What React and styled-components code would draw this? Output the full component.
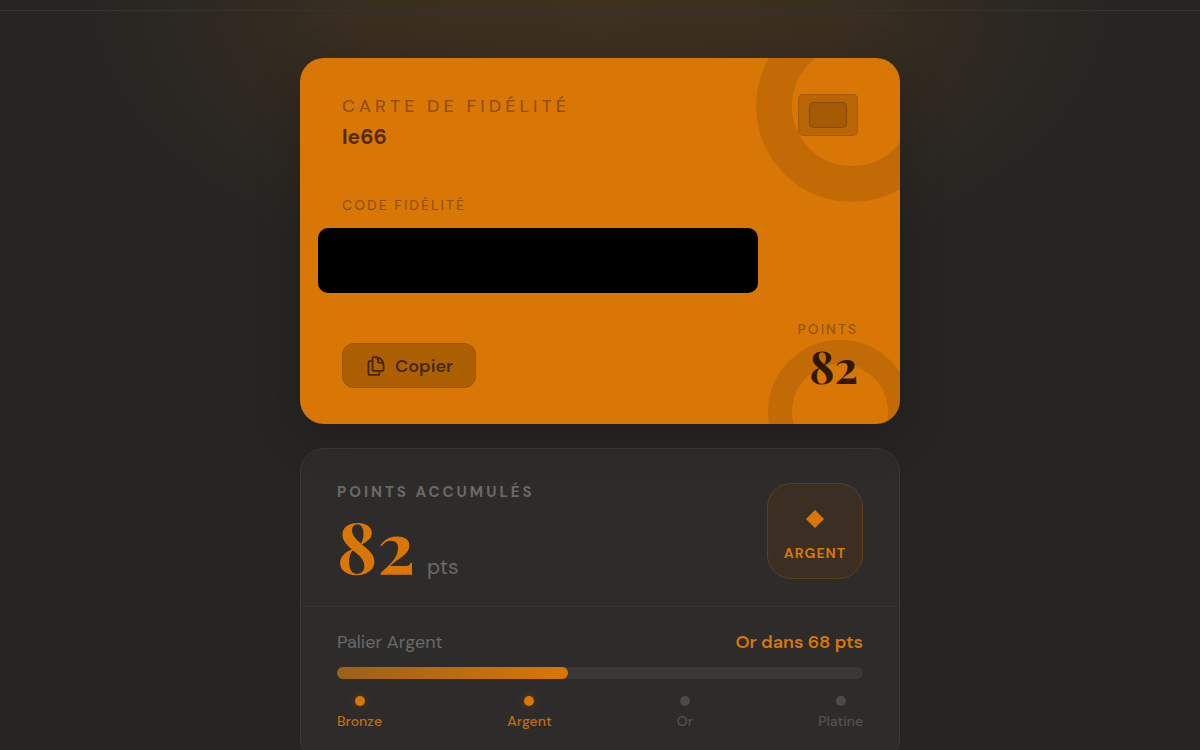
import React from "react"
import styled, { createGlobalStyle, css } from "styled-components"

const colors = {
  background: "#262523",
  panel: "#2e2c2a",
  track: "#3a3735",
  line: "#3b3936",
  softLine: "#353330",
  primary: "#d97706",
  muted: "#6b6966",
  faint: "#53514f",
}
const fonts = {
  main: `"DM Sans", Inter, "Liberation Sans", sans-serif`,
  display: `"Playfair Display", "Liberation Serif", serif`,
}

const GlobalStyle = createGlobalStyle`
  * {
    box-sizing: border-box;
  }
  body {
    margin: 0;
    background: ${colors.background};
    font-family: ${fonts.main};
  }
`

const Page = styled.div`
  min-height: 100vh;
  background: radial-gradient(
    ellipse 540px 300px at 50% 0,
    rgba(217, 119, 6, 0.14),
    rgba(217, 119, 6, 0.11) 45%,
    rgba(217, 119, 6, 0.04) 75%,
    transparent
  );
`
const TopBar = styled.header`
  height: 11px;
  border-bottom: 1px solid ${colors.softLine};
`
const Main = styled.main`
  display: flex;
  flex-direction: column;
  gap: 24px;
  max-width: 600px;
  margin: 0 auto;
  padding: 47px 0 48px;
`
const Card = styled.section`
  position: relative;
  padding: 36px 42px;
  border-radius: 24px;
  overflow: hidden;
  background: ${colors.primary};
  box-shadow: 0 12px 48px rgba(0, 0, 0, 0.2);
`
const Ring = styled.span`
  position: absolute;
  border-radius: 50%;
  border-style: solid;
  border-color: rgba(0, 0, 0, 0.1);
  ${({ $corner }) =>
    $corner === "top"
      ? css`
          top: -48px;
          right: -48px;
          width: 192px;
          height: 192px;
          border-width: 36px;
        `
      : css`
          bottom: -60px;
          right: -12px;
          width: 144px;
          height: 144px;
          border-width: 24px;
        `};
`
const Row = styled.div`
  position: relative;
  display: flex;
  justify-content: space-between;
  align-items: ${({ $align }) => $align || "flex-start"};
`
const CardTitle = styled.h1`
  margin: 0;
  font-size: 18px;
  line-height: 24px;
  font-weight: 500;
  letter-spacing: 4px;
  text-transform: uppercase;
  color: rgba(0, 0, 0, 0.35);
`
const CardOwner = styled.p`
  margin: 5px 0 0;
  font-size: 21px;
  line-height: 28px;
  font-weight: 700;
  color: rgba(0, 0, 0, 0.65);
`
const Chip = styled.span`
  display: grid;
  place-items: center;
  width: 60px;
  height: 42px;
  border: 1px solid rgba(0, 0, 0, 0.1);
  border-radius: 5px;
  background: rgba(0, 0, 0, 0.15);
  &:after {
    content: "";
    width: 36px;
    height: 24px;
    border: 1px solid rgba(0, 0, 0, 0.2);
    border-radius: 5px;
    background: rgba(0, 0, 0, 0.1);
  }
`
const Caption = styled.p`
  margin: 0;
  font-size: 14px;
  line-height: 20px;
  font-weight: 500;
  letter-spacing: 2px;
  text-transform: uppercase;
  color: rgba(0, 0, 0, 0.34);
`
const Code = styled.div`
  margin: 44px 0 26px;
`
const CodeMask = styled.div`
  width: 440px;
  max-width: 100%;
  height: 65px;
  margin: 13px 0 0 -24px;
  border-radius: 10px;
  background: #000;
`
const CopyButton = styled.button`
  display: flex;
  align-items: center;
  gap: 8px;
  height: 45px;
  padding: 0 22px;
  border: 1px solid rgba(0, 0, 0, 0.1);
  border-radius: 12px;
  background: rgba(0, 0, 0, 0.2);
  font-family: ${fonts.main};
  font-size: 18px;
  font-weight: 600;
  color: rgba(0, 0, 0, 0.6);
`
const CardPoints = styled.div`
  text-align: right;
`
const Score = styled.p`
  font-family: ${fonts.display};
  font-weight: 700;
  ${({ $large }) =>
    $large
      ? css`
          margin: 0;
          font-size: 72px;
          line-height: 72px;
          color: ${colors.primary};
        `
      : css`
          margin: 2px 0 -2px;
          font-size: 45px;
          line-height: 49px;
          color: rgba(0, 0, 0, 0.8);
        `};
`
const Unit = styled.span`
  margin-left: 12px;
  font-family: ${fonts.main};
  font-size: 21px;
  line-height: 24px;
  font-weight: 400;
  color: ${colors.muted};
`
const Panel = styled.section`
  border: 1px solid ${colors.line};
  border-radius: 24px;
  background: ${colors.panel};
`
const PanelBlock = styled.div`
  padding: ${({ $top }) => ($top ? "34px 36px 26px" : "23px 36px 32px")};
  border-bottom: ${({ $top }) => ($top ? `1px solid ${colors.softLine}` : "0")};
`
const PanelTitle = styled.h2`
  margin: 0 0 7px;
  font-size: 15px;
  line-height: 18px;
  font-weight: 700;
  letter-spacing: 3px;
  text-transform: uppercase;
  color: ${colors.muted};
`
const Badge = styled.div`
  display: flex;
  flex-direction: column;
  align-items: center;
  justify-content: center;
  gap: 17px;
  width: 96px;
  height: 96px;
  padding-top: 8px;
  border: 1px solid #5e3e19;
  border-radius: 24px;
  background: #3b2f24;
  font-size: 14px;
  line-height: 16px;
  font-weight: 700;
  letter-spacing: 1px;
  text-transform: uppercase;
  color: ${colors.primary};
`
const Tier = styled.span`
  font-size: 18px;
  line-height: 24px;
  font-weight: ${({ $next }) => ($next ? 600 : 400)};
  color: ${({ $next }) => ($next ? colors.primary : colors.muted)};
`
const Track = styled.div`
  height: 12px;
  margin: 13px 0 17px;
  border-radius: 6px;
  background: ${colors.track};
`
const Fill = styled.div`
  height: 100%;
  border-radius: 6px;
  background: linear-gradient(90deg, #9c6019, ${colors.primary});
`
const Steps = styled.ol`
  display: flex;
  justify-content: space-between;
  margin: 0;
  padding: 0;
  list-style: none;
`
const Step = styled.li`
  display: flex;
  flex-direction: column;
  align-items: center;
  gap: 6px;
  font-size: 14px;
  line-height: 18px;
  font-weight: 500;
  color: ${({ $done }) => ($done ? "#c36d0b" : colors.faint)};
  &:before {
    content: "";
    width: 10px;
    height: 10px;
    border-radius: 50%;
    background: ${({ $done }) => ($done ? colors.primary : "#4c4a48")};
    box-shadow: ${({ $done }) =>
      $done ? "0 0 8px rgba(217, 119, 6, 0.3)" : "none"};
  }
`

const CopyIcon = () => (
  <svg
    width="22"
    height="22"
    viewBox="0 0 24 24"
    fill="none"
    stroke="currentColor"
    strokeWidth="2"
    strokeLinecap="round"
    strokeLinejoin="round"
    aria-hidden="true"
  >
    <path d="M15.75 17.25v3.375c0 .621-.504 1.125-1.125 1.125h-9.75a1.125 1.125 0 0 1-1.125-1.125V7.875c0-.621.504-1.125 1.125-1.125H6.75a9.06 9.06 0 0 1 1.5.124m7.5 10.376h3.375c.621 0 1.125-.504 1.125-1.125V11.25c0-4.46-3.243-8.161-7.5-8.876a9.06 9.06 0 0 0-1.5-.124H9.375c-.621 0-1.125.504-1.125 1.125v3.5m7.5 10.375H9.375a1.125 1.125 0 0 1-1.125-1.125v-9.25m12 6.625v-1.875a3.375 3.375 0 0 0-3.375-3.375h-1.5a1.125 1.125 0 0 1-1.125-1.125v-1.5a3.375 3.375 0 0 0-3.375-3.375H9.75" />
  </svg>
)

const DiamondIcon = () => (
  <svg width="18" height="18" viewBox="0 0 18 18" aria-hidden="true">
    <path d="M9 0l9 9-9 9-9-9z" fill="currentColor" />
  </svg>
)

const steps = [
  { name: "Bronze", done: true },
  { name: "Argent", done: true },
  { name: "Or", done: false },
  { name: "Platine", done: false },
]
const points = 82
const progress = 44

const App = () => (
  <Page>
    <GlobalStyle />
    <TopBar />
    <Main>
      <Card>
        <Ring $corner="top" />
        <Ring $corner="bottom" />
        <Row>
          <div>
            <CardTitle>Carte de fidélité</CardTitle>
            <CardOwner>le66</CardOwner>
          </div>
          <Chip />
        </Row>
        <Code>
          <Caption>Code fidélité</Caption>
          <CodeMask />
        </Code>
        <Row $align="flex-end">
          <CopyButton type="button">
            <CopyIcon />
            Copier
          </CopyButton>
          <CardPoints>
            <Caption>Points</Caption>
            <Score>{points}</Score>
          </CardPoints>
        </Row>
      </Card>

      <Panel>
        <PanelBlock $top>
          <Row>
            <div>
              <PanelTitle>Points accumulés</PanelTitle>
              <Score $large>
                {points}
                <Unit>pts</Unit>
              </Score>
            </div>
            <Badge>
              <DiamondIcon />
              Argent
            </Badge>
          </Row>
        </PanelBlock>
        <PanelBlock>
          <Row>
            <Tier>Palier Argent</Tier>
            <Tier $next>Or dans 68 pts</Tier>
          </Row>
          <Track>
            <Fill style={{ width: `${progress}%` }} />
          </Track>
          <Steps>
            {steps.map(({ name, done }) => (
              <Step key={name} $done={done}>
                {name}
              </Step>
            ))}
          </Steps>
        </PanelBlock>
      </Panel>
    </Main>
  </Page>
)

export default App
